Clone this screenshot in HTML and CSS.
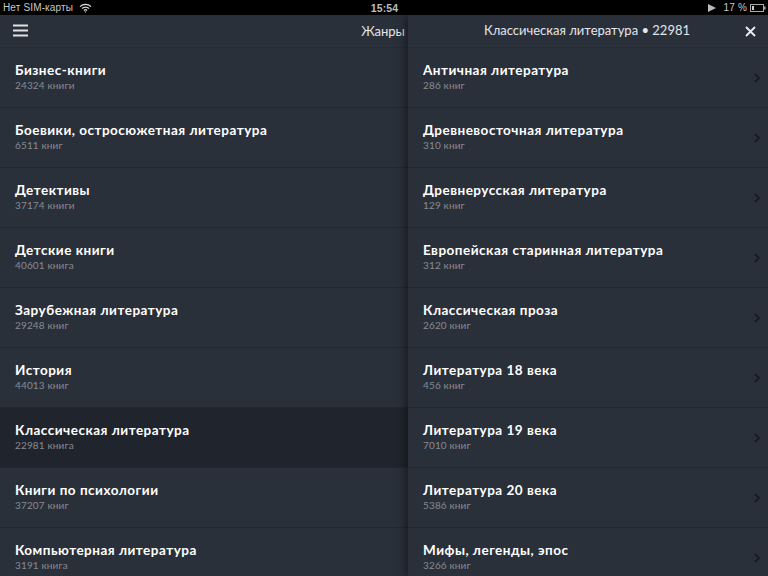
FILE: index.html
```html
<!DOCTYPE html>
<html lang="ru">
<head>
<meta charset="utf-8">
<title>Жанры</title>
<link rel="stylesheet" href="styles.css">
</head>
<body>
<div class="status">
  <div class="status-left">Нет SIM-карты
    <svg class="wifi" width="13" height="10" viewBox="0 0 13 10"><path d="M1 3.6a8 8 0 0 1 11 0M3 5.6a5.2 5.2 0 0 1 7 0M4.9 7.4a2.4 2.4 0 0 1 3.2 0" fill="none" stroke="#ddd" stroke-width="1.3"/><path d="M6.5 9.8 5.4 8.4h2.2z" fill="#ddd"/></svg>
  </div>
  <div class="status-time">15:54</div>
  <div class="status-right">
    <svg width="8" height="8" viewBox="0 0 8 8"><path d="M0 0l8 4-8 4z" fill="#bbb"/></svg>
    <span class="battery-text">17 %</span>
    <svg width="16" height="8" viewBox="0 0 16 8"><rect x=".5" y=".5" width="13" height="7" fill="none" stroke="#aaa"/><rect x="2" y="2" width="2" height="4" fill="#ccc"/><rect x="14" y="2.5" width="1.5" height="3" fill="#aaa"/></svg>
  </div>
</div>
<main class="panels">
  <section class="panel left">
    <header class="bar bar-left">
      <svg width="15" height="13" viewBox="0 0 15 13"><path d="M0 1.5h15M0 6.5h15M0 11.5h15" stroke="#dfe1e4" stroke-width="2.2"/></svg>
      <h1 class="bar-title">Жанры</h1>
    </header>
    <ul class="list">
      <li class="row"><b>Бизнес-книги</b><small>24324 книги</small></li>
      <li class="row"><b>Боевики, остросюжетная литература</b><small>6511 книг</small></li>
      <li class="row"><b>Детективы</b><small>37174 книги</small></li>
      <li class="row"><b>Детские книги</b><small>40601 книга</small></li>
      <li class="row"><b>Зарубежная литература</b><small>29248 книг</small></li>
      <li class="row"><b>История</b><small>44013 книг</small></li>
      <li class="row selected"><b>Классическая литература</b><small>22981 книга</small></li>
      <li class="row"><b>Книги по психологии</b><small>37207 книг</small></li>
      <li class="row"><b>Компьютерная литература</b><small>3191 книга</small></li>
    </ul>
  </section>
  <section class="panel right">
    <header class="bar bar-right">
      <h2 class="bar-title">Классическая литература • 22981</h2>
      <svg class="close" width="11" height="11" viewBox="0 0 11 11"><path d="M1 1l9 9M10 1l-9 9" stroke="#eceef0" stroke-width="1.8"/></svg>
    </header>
    <ul class="list">
      <li class="row"><b>Античная литература</b><small>286 книг</small><svg class="chev" width="6" height="10" viewBox="0 0 6 10"><path d="M1 1l4 4-4 4" fill="none" stroke="#171b21" stroke-width="1.8"/></svg></li>
      <li class="row"><b>Древневосточная литература</b><small>310 книг</small><svg class="chev" width="6" height="10" viewBox="0 0 6 10"><path d="M1 1l4 4-4 4" fill="none" stroke="#171b21" stroke-width="1.8"/></svg></li>
      <li class="row"><b>Древнерусская литература</b><small>129 книг</small><svg class="chev" width="6" height="10" viewBox="0 0 6 10"><path d="M1 1l4 4-4 4" fill="none" stroke="#171b21" stroke-width="1.8"/></svg></li>
      <li class="row"><b>Европейская старинная литература</b><small>312 книг</small><svg class="chev" width="6" height="10" viewBox="0 0 6 10"><path d="M1 1l4 4-4 4" fill="none" stroke="#171b21" stroke-width="1.8"/></svg></li>
      <li class="row"><b>Классическая проза</b><small>2620 книг</small><svg class="chev" width="6" height="10" viewBox="0 0 6 10"><path d="M1 1l4 4-4 4" fill="none" stroke="#171b21" stroke-width="1.8"/></svg></li>
      <li class="row"><b>Литература 18 века</b><small>456 книг</small><svg class="chev" width="6" height="10" viewBox="0 0 6 10"><path d="M1 1l4 4-4 4" fill="none" stroke="#171b21" stroke-width="1.8"/></svg></li>
      <li class="row"><b>Литература 19 века</b><small>7010 книг</small><svg class="chev" width="6" height="10" viewBox="0 0 6 10"><path d="M1 1l4 4-4 4" fill="none" stroke="#171b21" stroke-width="1.8"/></svg></li>
      <li class="row"><b>Литература 20 века</b><small>5386 книг</small><svg class="chev" width="6" height="10" viewBox="0 0 6 10"><path d="M1 1l4 4-4 4" fill="none" stroke="#171b21" stroke-width="1.8"/></svg></li>
      <li class="row"><b>Мифы, легенды, эпос</b><small>3266 книг</small><svg class="chev" width="6" height="10" viewBox="0 0 6 10"><path d="M1 1l4 4-4 4" fill="none" stroke="#171b21" stroke-width="1.8"/></svg></li>
    </ul>
  </section>
</main>
</body>
</html>
```
FILE: styles.css
```css
* { box-sizing: border-box; margin: 0; padding: 0; }
html, body { width: 768px; height: 576px; overflow: hidden; background: #2a303a; }
body { font-family: "Lato", "Noto Sans", sans-serif; color: #fff; }

.status {
  height: 15px;
  background: #000;
  display: grid;
  grid-template-columns: 1fr auto 1fr;
  align-items: center;
  padding: 0 2px 0 3px;
  font-family: "Liberation Sans", sans-serif;
  font-size: 10px;
  letter-spacing: 0.15px;
  color: #c8c8c8;
}
.status-left { display: flex; align-items: center; gap: 6px; }
.status-time { font-weight: bold; color: #bdbdbd; font-size: 10.5px; }
.status-right { display: flex; align-items: center; justify-content: flex-end; gap: 4px; }
.battery-text { margin: 0 -1px 0 4px; }

.panels { display: flex; height: 561px; overflow: hidden; }
.panel { height: 100%; overflow: hidden; background: #2a303a; }
.left { width: 408px; }
.right { width: 360px; box-shadow: -3px 0 8px rgba(10, 12, 16, 0.55); position: relative; }

.bar {
  height: 33px;
  display: flex;
  align-items: center;
  border-bottom: 1px solid #262b34;
}
.bar-left { justify-content: space-between; padding: 0 3px 1px 13px; }
.bar-right { justify-content: center; position: relative; padding: 0 2px 2px 0; }
.bar-title { font-size: 13px; font-weight: 400; color: #e4e6e9; }
.close { position: absolute; right: 12px; top: 11px; }

.list { list-style: none; }
.row {
  height: 60px;
  padding: 14px 15px 0;
  display: flex;
  flex-direction: column;
  border-bottom: 1px solid #232830;
  position: relative;
}
.selected { background: #20252d; }
.row b { font-size: 13.5px; line-height: 17px; font-weight: 700; letter-spacing: 0.5px; color: #fff; white-space: nowrap; }
.row small { font-size: 10px; line-height: 13px; letter-spacing: 0.15px; color: #858b94; }
.chev { position: absolute; right: 8px; top: 25px; }
```
